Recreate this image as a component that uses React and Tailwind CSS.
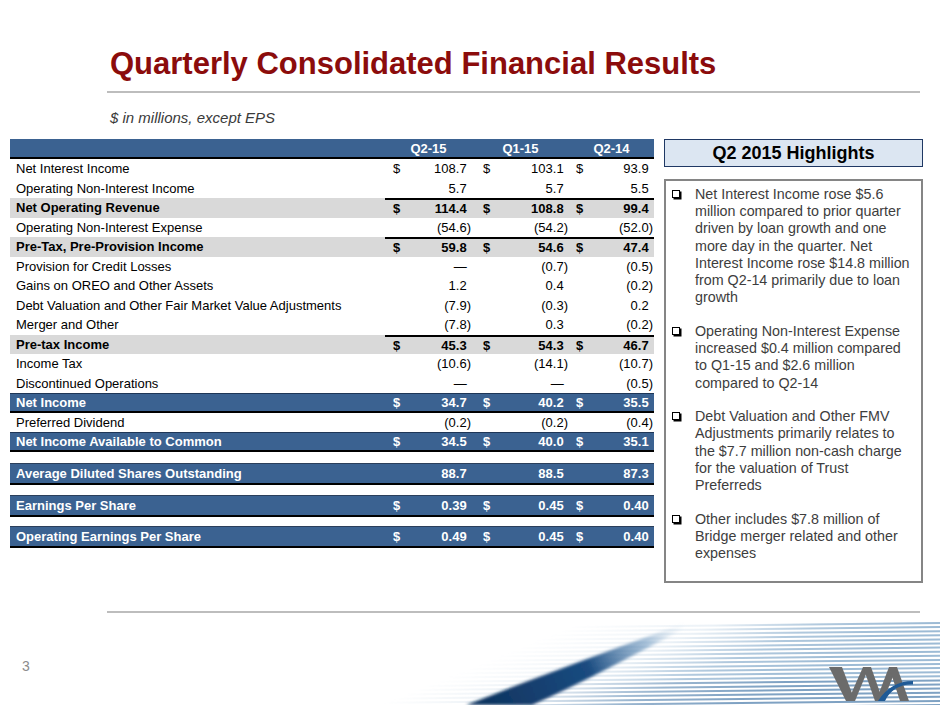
const rows = [
  { label: "Net Interest Income", v: ["108.7", "103.1", "93.9"], d: true },
  { label: "Operating Non-Interest Income", v: ["5.7", "5.7", "5.5"] },
  { label: "Net Operating Revenue", v: ["114.4", "108.8", "99.4"], d: true, kind: "sub" },
  { label: "Operating Non-Interest Expense", v: ["(54.6)", "(54.2)", "(52.0)"] },
  { label: "Pre-Tax, Pre-Provision Income", v: ["59.8", "54.6", "47.4"], d: true, kind: "sub" },
  { label: "Provision for Credit Losses", v: ["—", "(0.7)", "(0.5)"] },
  { label: "Gains on OREO and Other Assets", v: ["1.2", "0.4", "(0.2)"] },
  { label: "Debt Valuation and Other Fair Market Value Adjustments", v: ["(7.9)", "(0.3)", "0.2"] },
  { label: "Merger and Other", v: ["(7.8)", "0.3", "(0.2)"] },
  { label: "Pre-tax Income", v: ["45.3", "54.3", "46.7"], d: true, kind: "sub" },
  { label: "Income Tax", v: ["(10.6)", "(14.1)", "(10.7)"] },
  { label: "Discontinued Operations", v: ["—", "—", "(0.5)"] },
  { label: "Net Income", v: ["34.7", "40.2", "35.5"], d: true, kind: "blue" },
  { label: "Preferred Dividend", v: ["(0.2)", "(0.2)", "(0.4)"] },
  { label: "Net Income Available to Common", v: ["34.5", "40.0", "35.1"], d: true, kind: "blue" },
];

const bars = [
  { label: "Average Diluted Shares Outstanding", v: ["88.7", "88.5", "87.3"], gap: "mt-[11px]" },
  { label: "Earnings Per Share", v: ["0.39", "0.45", "0.40"], d: true, gap: "mt-[10.5px]" },
  { label: "Operating Earnings Per Share", v: ["0.49", "0.45", "0.40"], d: true, gap: "mt-[9px]" },
];

const colPad = ["pl-[8px]", "pl-[11px]", "pl-[7px]"];

const highlights = [
  [
    "Net Interest Income rose $5.6",
    "million compared to prior quarter",
    "driven by loan growth and one",
    "more day in the quarter. Net",
    "Interest Income rose $14.8 million",
    "from Q2-14 primarily due to loan",
    "growth",
  ],
  [
    "Operating Non-Interest Expense",
    "increased $0.4 million compared",
    "to Q1-15 and $2.6 million",
    "compared to Q2-14",
  ],
  [
    "Debt Valuation and Other FMV",
    "Adjustments primarily relates to",
    "the $7.7 million non-cash charge",
    "for the valuation of Trust",
    "Preferreds",
  ],
  [
    "Other includes $7.8 million of",
    "Bridge merger related and other",
    "expenses",
  ],
];

const Num = ({ value, dollar, i, top }) => (
  <div
    className={`flex items-center justify-between pr-[1px] ${colPad[i]} ${
      top ? "border-t-2 border-black" : ""
    }`}
  >
    <span>{dollar ? "$" : ""}</span>
    <span>
      {value}
      {!value.endsWith(")") && <span className="invisible">)</span>}
    </span>
  </div>
);

const Row = ({ row }) => {
  let tone = "text-black";
  if (row.kind === "sub") tone = "bg-[#d9d9d9] font-bold text-black";
  if (row.kind === "blue")
    tone = "bg-[#3b6291] font-bold text-white border-t border-t-[#1e3657] border-b-2 border-b-black";
  return (
    <div className={`grid h-[19.5px] grid-cols-[375px_87px_97px_85px] leading-none ${tone}`}>
      <div className="flex items-center pl-[6px]">{row.label}</div>
      {row.v.map((value, i) => (
        <Num key={i} value={value} dollar={row.d} i={i} top={row.kind === "sub"} />
      ))}
    </div>
  );
};

const Bar = ({ row }) => (
  <div
    className={`${row.gap} grid h-[22px] grid-cols-[375px_87px_97px_85px] border-t border-t-[#2b3f5b] border-b-2 border-b-black bg-[#3b6291] font-bold leading-none text-white`}
  >
    <div className="flex items-center pl-[6px]">{row.label}</div>
    {row.v.map((value, i) => (
      <Num key={i} value={value} dollar={row.d} i={i} />
    ))}
  </div>
);

const Swoosh = () => {
  const stripes = Array.from({ length: 21 }, (_, i) => i);
  return (
    <svg className="absolute left-[380px] top-[620px]" width="560" height="85" viewBox="0 0 560 85">
      <defs>
        <linearGradient id="reveal" gradientUnits="userSpaceOnUse" x1="240" y1="-14" x2="290" y2="108">
          <stop offset="0" stopColor="#fff" stopOpacity="0" />
          <stop offset="0.4" stopColor="#fff" stopOpacity="0.2" />
          <stop offset="0.7" stopColor="#fff" stopOpacity="0.8" />
          <stop offset="1" stopColor="#fff" stopOpacity="1" />
        </linearGradient>
        <mask id="stripeMask">
          <rect width="560" height="85" fill="url(#reveal)" />
        </mask>
        <linearGradient id="streak" gradientUnits="userSpaceOnUse" x1="110" y1="85" x2="305" y2="5">
          <stop offset="0" stopColor="#0f3561" />
          <stop offset="0.5" stopColor="#1a4b80" />
          <stop offset="0.8" stopColor="#6f99c0" stopOpacity="0.6" />
          <stop offset="1" stopColor="#c7d9e8" stopOpacity="0" />
        </linearGradient>
        <filter id="soft" x="-20%" y="-20%" width="140%" height="140%">
          <feGaussianBlur stdDeviation="1.8" />
        </filter>
      </defs>
      <g mask="url(#stripeMask)">
        {stripes.map((i) => (
          <line
            key={i}
            x1="0"
            y1={9 + i * 4.1}
            x2="560"
            y2={3 + i * 4.1}
            stroke={i > 13 ? "#7fa2c3" : "#9dbbd5"}
            strokeWidth="2"
          />
        ))}
      </g>
      <path
        d="M86 85 C150 60 235 28 306 3 L310 6 C255 34 200 64 152 85 Z"
        fill="url(#streak)"
        filter="url(#soft)"
      />
    </svg>
  );
};

const Logo = () => (
  <svg className="absolute left-[828px] top-[666px]" width="86" height="36" viewBox="0 0 86 36">
    <g fill="#6b6b6b">
      <polygon points="1,1 14,1 27,35 18,35" />
      <polygon points="20,35 27,35 41,1 35,1" />
      <polygon points="35,1 43,1 55,35 47,35" />
      <polygon points="48,35 55,35 69,1 61,1" />
      <polygon points="61,1 69,1 81,35 72,35" />
    </g>
    <path d="M50 35 C58 22 70 15 85 15 L85 18.5 C72 18 62 24 57 35 Z" fill="#1f5a96" />
  </svg>
);

const App = () => {
  return (
    <div className="relative h-[705px] w-[940px] overflow-hidden bg-white font-['Liberation_Sans',Arial,sans-serif]">
      <header className="pl-[107px] pr-[20px] pt-[48px]">
        <h1 className="pl-[3px] text-[31px] font-bold leading-[31px] text-[#8b0c0c]">
          Quarterly Consolidated Financial Results
        </h1>
        <div className="mt-[12px] h-[2px] bg-[#bdbdbd]" />
        <p className="mt-[17px] pl-[3px] text-[15px] italic leading-[15px] text-[#3a3a3a]">
          $ in millions, except EPS
        </p>
      </header>

      <main className="mt-[14px] flex items-start pl-[10px]">
        <section className="w-[644px] text-[13px]">
          <div className="grid h-[20px] grid-cols-[375px_87px_97px_85px] border-b-2 border-black bg-[#3b6291] font-bold leading-none text-white">
            <div />
            <div className="flex items-center justify-center">Q2-15</div>
            <div className="flex items-center justify-center">Q1-15</div>
            <div className="flex items-center justify-center">Q2-14</div>
          </div>
          {rows.map((row) => (
            <Row key={row.label} row={row} />
          ))}
          {bars.map((row) => (
            <Bar key={row.label} row={row} />
          ))}
        </section>

        <aside className="ml-[10px] w-[259px]">
          <div className="flex h-[28px] items-center justify-center border-[1.5px] border-[#1f3864] bg-[#dce6f2] text-[18px] font-bold text-black">
            Q2 2015 Highlights
          </div>
          <div className="mt-[12px] h-[404px] border-2 border-[#858585] pl-[6px] pt-[5px] text-[14.3px] leading-[17.2px] text-[#3d3d3d]">
            {highlights.map((lines, i) => (
              <div key={i} className={`flex ${i > 0 ? "mt-[16.5px]" : ""}`}>
                <div className="w-[23px] shrink-0 pt-[4px]">
                  <div className="h-[8px] w-[8px] border border-black shadow-[1.5px_1.5px_0_#000]" />
                </div>
                <div>
                  {lines.map((line) => (
                    <div key={line} className="whitespace-nowrap">
                      {line}
                    </div>
                  ))}
                </div>
              </div>
            ))}
          </div>
        </aside>
      </main>

      <footer>
        <div className="ml-[107px] mr-[20px] mt-[28px] h-[2px] bg-[#bdbdbd]" />
        <div className="mt-[46px] pl-[22px] text-[14px] leading-[14px] text-[#8c8c8c]">3</div>
      </footer>

      <Swoosh />
      <Logo />
    </div>
  );
};

export default App;
